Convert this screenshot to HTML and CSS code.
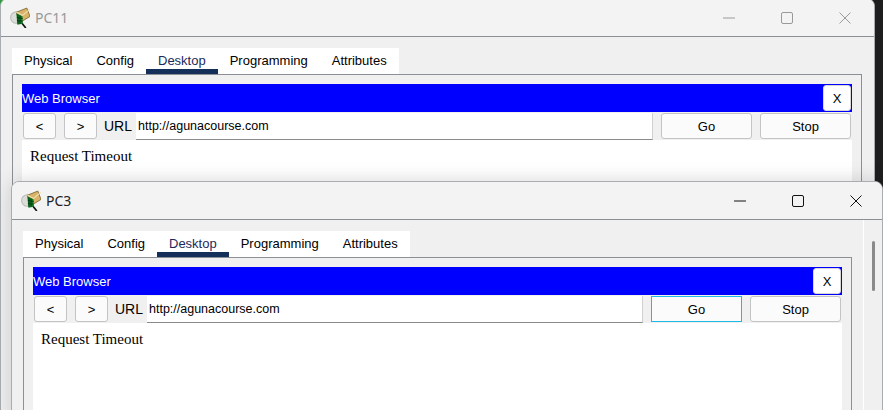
FILE: index.html
```html
<!DOCTYPE html>
<html lang="en">
<head>
    <meta charset="UTF-8">
    <meta name="viewport" content="width=device-width, initial-scale=1.0">
    <link rel="stylesheet" href="styles.css">
    <title>PC windows</title>
</head>
<body>
    <svg class="defs" width="0" height="0">
        <symbol id="pc-icon" viewBox="0 0 20 20">
            <circle cx="7" cy="10" r="5.5" fill="#dcdcd8" stroke="#b9bcb8"/>
            <path d="M12 15l4 5" stroke="#111" stroke-width="1.6" fill="none"/>
            <path d="M7 5l10-4 3 8-10 6z" fill="#d9b368" stroke="#7d6432" stroke-width=".8"/>
            <path d="M7 5l6 3 7-6" fill="none" stroke="#f3e2b4" stroke-width="1"/>
            <path d="M7 6l6 3v7l-5 1z" fill="#0f7a26"/>
            <path d="M8.5 7v9M10.500 8v8M7.500 10l5.500 1M7.500 13l5.500 .5" stroke="#03300e" stroke-width=".7" fill="none"/>
        </symbol>
        <symbol id="win-min" viewBox="0 0 12 12"><path d="M0 6h12" stroke="currentColor" fill="none"/></symbol>
        <symbol id="win-max" viewBox="0 0 12 12"><rect x=".5" y=".5" width="11" height="11" rx="1.500" stroke="currentColor" fill="none"/></symbol>
        <symbol id="win-close" viewBox="0 0 12 12"><path d="M.5 .5l11 11M11.500 .5l-11 11" stroke="currentColor" fill="none"/></symbol>
    </svg>

    <div class="window window-back">
        <div class="titlebar">
            <svg class="app-icon"><use href="#pc-icon"/></svg>
            <span class="title">PC11</span>
            <div class="controls">
                <svg class="ctl"><use href="#win-min"/></svg>
                <svg class="ctl"><use href="#win-max"/></svg>
                <svg class="ctl"><use href="#win-close"/></svg>
            </div>
        </div>
        <div class="window-body">
            <div class="device">
                <div class="tabs">
                    <span class="tab">Physical</span>
                    <span class="tab">Config</span>
                    <span class="tab active">Desktop</span>
                    <span class="tab">Programming</span>
                    <span class="tab">Attributes</span>
                </div>
                <div class="panel">
                    <div class="browser-head">
                        <span>Web Browser</span>
                        <button class="btn closebtn">X</button>
                    </div>
                    <div class="toolbar">
                        <button class="btn navbtn">&lt;</button>
                        <button class="btn navbtn">&gt;</button>
                        <span class="url-label">URL</span>
                        <div class="url-input">http://agunacourse.com</div>
                        <button class="btn actionbtn">Go</button>
                        <button class="btn actionbtn">Stop</button>
                    </div>
                    <div class="page">Request Timeout</div>
                </div>
            </div>
        </div>
    </div>

    <div class="window window-front">
        <div class="titlebar">
            <svg class="app-icon"><use href="#pc-icon"/></svg>
            <span class="title">PC3</span>
            <div class="controls">
                <svg class="ctl"><use href="#win-min"/></svg>
                <svg class="ctl"><use href="#win-max"/></svg>
                <svg class="ctl"><use href="#win-close"/></svg>
            </div>
        </div>
        <div class="window-body">
            <div class="device">
                <div class="tabs">
                    <span class="tab">Physical</span>
                    <span class="tab">Config</span>
                    <span class="tab active">Desktop</span>
                    <span class="tab">Programming</span>
                    <span class="tab">Attributes</span>
                </div>
                <div class="panel">
                    <div class="browser-head">
                        <span>Web Browser</span>
                        <button class="btn closebtn">X</button>
                    </div>
                    <div class="toolbar">
                        <button class="btn navbtn">&lt;</button>
                        <button class="btn navbtn">&gt;</button>
                        <span class="url-label">URL</span>
                        <div class="url-input">http://agunacourse.com</div>
                        <button class="btn actionbtn focused">Go</button>
                        <button class="btn actionbtn">Stop</button>
                    </div>
                    <div class="page">Request Timeout</div>
                </div>
            </div>
            <div class="scrollbar"><div class="thumb"></div></div>
        </div>
    </div>
</body>
</html>
```

FILE: styles.css
```css
*{
    margin:0px;
    padding:0px;
    box-sizing: border-box;
}
body{
    width: 883px;
    height: 410px;
    overflow: hidden;
    position: relative;
    background: linear-gradient(90deg, #2f9d3f 50%, #1e1e1e 50%);
    font-family: "Liberation Sans", Arial, sans-serif;
    font-size: 13px;
    color: #000;
}
.defs{
    position: absolute;
}

/* windows sit on a free desktop */
.window{
    position: absolute;
    display: flex;
    flex-direction: column;
    background-color: #f0f0f0;
    border: 1px solid #a9adb1;
    border-radius: 8px 8px 0 0;
    overflow: hidden;
}
.window-back{
    left: 0px;
    top: -2px;
    width: 875px;
    height: 420px;
}
.window-front{
    left: 11px;
    top: 181px;
    width: 872px;
    height: 240px;
    box-shadow: 0 0 20px rgba(0,0,0,0.16);
}

.titlebar{
    display: flex;
    align-items: center;
    flex: 0 0 38px;
    padding-left: 8px;
    background-color: #f3f3f3;
    border-bottom: 1px solid #8b9096;
}
.app-icon{
    width: 21px;
    height: 21px;
    margin-right: 5px;
}
.title{
    font-family: "Noto Sans", sans-serif;
    font-size: 14px;
    color: #222;
}
.controls{
    margin-left: auto;
    display: flex;
    gap: 46px;
    color: #111;
}
.ctl{
    width: 12px;
    height: 12px;
}
.window-back .controls{
    padding-right: 23px;
}
.window-front .controls{
    padding-right: 20px;
}
.window-back .title,
.window-back .controls{
    color: #9a9a9a;
}

.window-body{
    display: flex;
    flex: 1;
    padding-left: 11px;
    padding-top: 11px;
}
.device{
    flex: 1;
    display: flex;
    flex-direction: column;
    padding-right: 12px;
}
.window-front .device{
    padding-right: 11px;
}

.tabs{
    display: flex;
    align-self: flex-start;
    height: 26px;
    background-color: #fff;
}
.tab{
    padding: 0 12px;
    line-height: 26px;
    height: 26px;
}
.tab.active{
    color: #1c2a5a;
    border-bottom: 5px solid #14305a;
}

.panel{
    flex: 1;
    border: 1px solid #8b9096;
    padding: 9px 9px 0 9px;
    display: flex;
    flex-direction: column;
}
.browser-head{
    display: flex;
    align-items: center;
    justify-content: space-between;
    height: 28px;
    padding-right: 1px;
    background-color: #0000ff;
    color: #fff;
}
.btn{
    height: 26px;
    font-family: "Liberation Sans", Arial, sans-serif;
    font-size: 13px;
    color: #000;
    background-color: #fbfbfb;
    border: 1px solid #c4c4c4;
    border-radius: 3px;
}
.closebtn{
    width: 28px;
    border-color: #d8d8d8;
    background-color: #fff;
}
.toolbar{
    display: flex;
    align-items: center;
    gap: 8px;
    height: 28px;
    padding: 0 1px;
}
.navbtn{
    width: 33px;
}
.url-label{
    margin-left: -1px;
    width: 32px;
    font-size: 14px;
    line-height: 26px;
}
.url-input{
    flex: 1;
    height: 27px;
    margin: 1px 0 0 -8px;
    padding-left: 2px;
    line-height: 26px;
    font-size: 12.500px;
    background-color: #fff;
    border-bottom: 1px solid #8b8b8b;
    border-right: 1px solid #d0d0d0;
}
.actionbtn{
    width: 91px;
}
.focused{
    border: 1px solid #1fb9e6;
    border-radius: 0;
}
.page{
    flex: 1;
    background-color: #fff;
    padding: 8px 8px;
    font-family: "Liberation Serif", "Times New Roman", serif;
    font-size: 15px;
    line-height: 17px;
}

.scrollbar{
    flex: 0 0 19px;
    margin-top: -11px;
    border-left: 1px solid #fff;
    padding: 21px 0 0 8px;
}
.thumb{
    width: 3px;
    height: 50px;
    border-radius: 2px;
    background-color: #8a8a8a;
}
```
